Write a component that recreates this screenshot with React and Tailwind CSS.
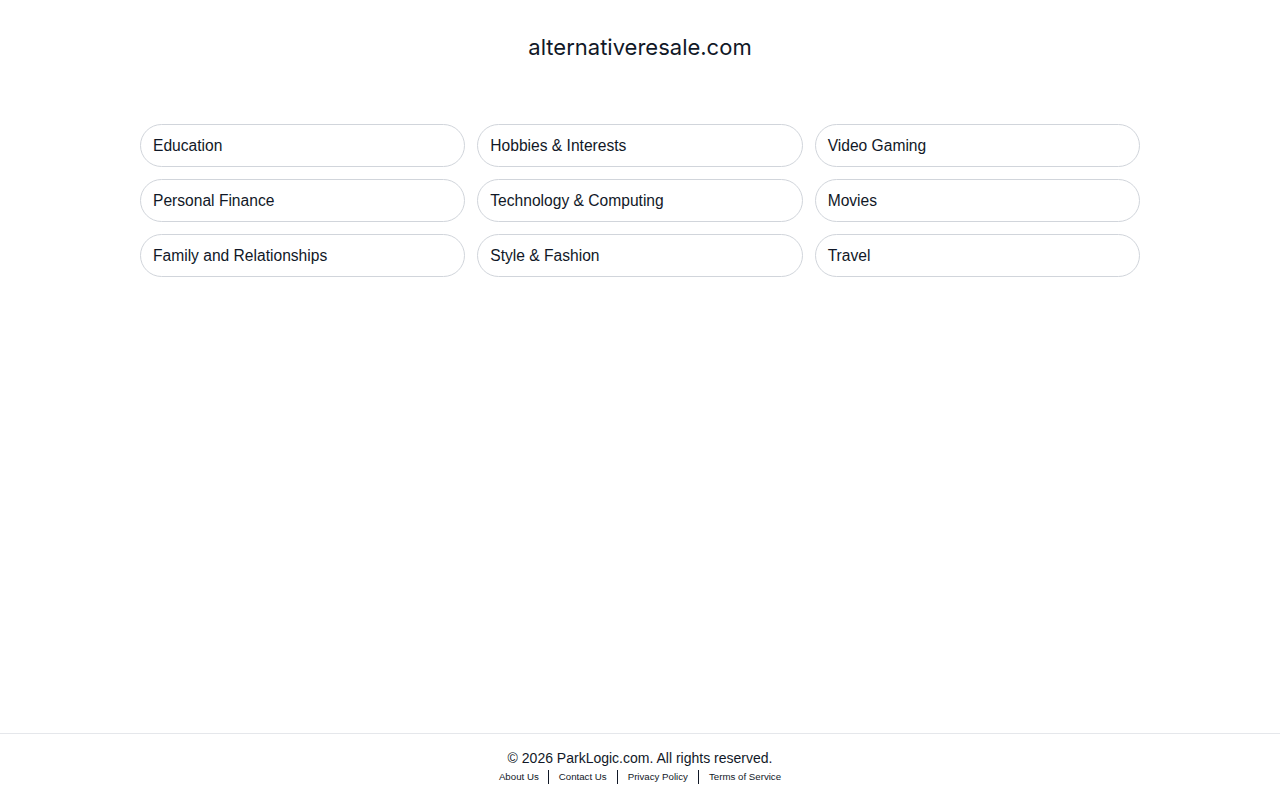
export default function App() {
  const items = [
    "Education",
    "Hobbies & Interests",
    "Video Gaming",
    "Personal Finance",
    "Technology & Computing",
    "Movies",
    "Family and Relationships",
    "Style & Fashion",
    "Travel",
  ];
  return (
    <div className="min-h-screen flex flex-col bg-white text-[#111827]" style={{ fontFamily: '"Liberation Sans", Arial, sans-serif' }}>
      <main className="flex-1">
        <h1 className="text-center text-[22px] leading-[28px] pt-[33px] text-[#111827]" style={{ fontFamily: 'Inter, "Liberation Sans", sans-serif' }}>
          alternativeresale.com
        </h1>
        <div className="mx-auto w-[1000px] mt-[63px] grid grid-cols-3 gap-x-[12px] gap-y-[12px]">
          {items.map((t) => (
            <a key={t} href="#" className="h-[43px] flex items-center px-[12px] rounded-full border border-[#d1d5db] text-[15.6px] text-[#111827]">
              {t}
            </a>
          ))}
        </div>
      </main>
      <footer className="border-t border-[#e5e7eb] h-[67px] flex flex-col items-center pt-[14px]">
        <div className="text-[14px] leading-[20px] text-[#111827]">© 2026 ParkLogic.com. All rights reserved.</div>
        <div className="flex items-center text-[9.7px] leading-[14px] text-[#111827] mt-[2px]">
          <a href="#" className="pr-[9px]">About Us</a>
          <span className="w-px h-[14px] bg-[#111827]"></span>
          <a href="#" className="px-[10px]">Contact Us</a>
          <span className="w-px h-[14px] bg-[#111827]"></span>
          <a href="#" className="px-[10px]">Privacy Policy</a>
          <span className="w-px h-[14px] bg-[#111827]"></span>
          <a href="#" className="pl-[10px]">Terms of Service</a>
        </div>
      </footer>
    </div>
  );
}
